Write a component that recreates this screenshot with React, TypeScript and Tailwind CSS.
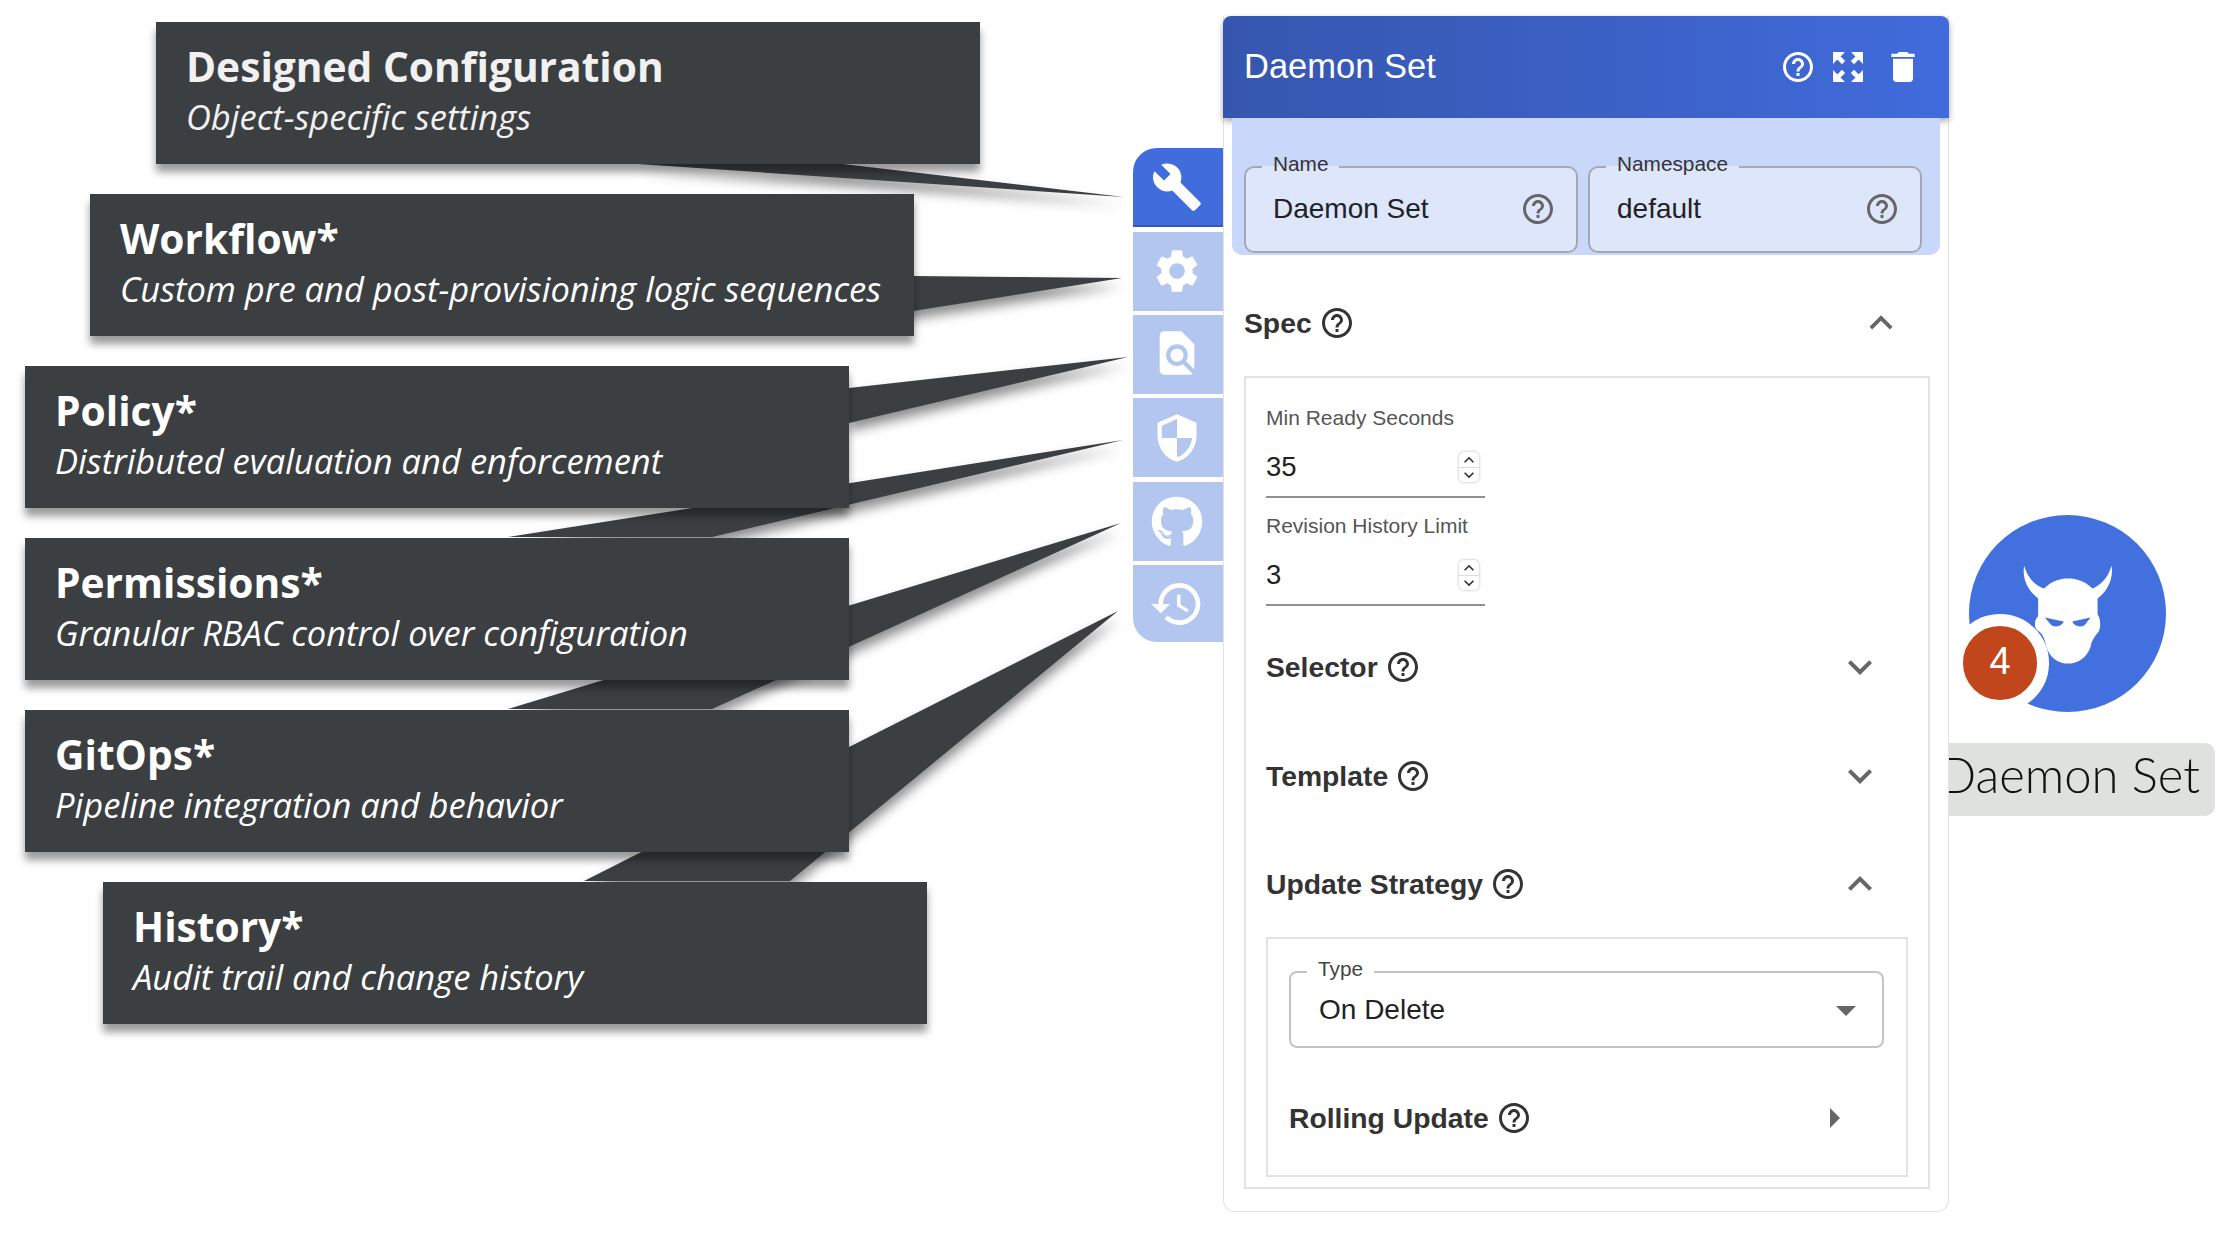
import { FaGithub } from "react-icons/fa";
import {
  MdArrowDropDown,
  MdArrowRight,
  MdBuild,
  MdDelete,
  MdExpandLess,
  MdExpandMore,
  MdFindInPage,
  MdHelpOutline,
  MdKeyboardArrowDown,
  MdKeyboardArrowUp,
  MdRestore,
  MdSecurity,
  MdSettings,
} from "react-icons/md";

const callouts = [
  { title: "Designed Configuration", text: "Object-specific settings", offset: "ml-[156px]", color: "text-[#f1f1f1]" },
  { title: "Workflow*", text: "Custom pre and post-provisioning logic sequences", offset: "ml-[90px]", color: "text-white" },
  { title: "Policy*", text: "Distributed evaluation and enforcement", offset: "ml-[25px]", color: "text-white" },
  { title: "Permissions*", text: "Granular RBAC control over configuration", offset: "ml-[25px]", color: "text-white" },
  { title: "GitOps*", text: "Pipeline integration and behavior", offset: "ml-[25px]", color: "text-white" },
  { title: "History*", text: "Audit trail and change history", offset: "ml-[103px]", color: "text-white" },
];

const tails = [
  "638,164 843,164 1124,197",
  "900,276 913,276 1122,278 913,311 900,311",
  "849,388 1128,357 849,423",
  "508,537 1123,440 712,537",
  "508,709 1121,523 712,709",
  "584,881 1118,611 790,881",
];

const tabs = [
  { icon: <MdBuild size={52} />, box: "h-[79px] bg-[#416cdc] rounded-tl-[24px] border-b-2 border-[#3558b8] mb-[5px]" },
  { icon: <MdSettings size={52} className="-mt-[2px]" />, box: "h-[79px] bg-[#b3c6f0] mb-[4px]" },
  { icon: <MdFindInPage size={52} className="-mt-[3px]" />, box: "h-[79px] bg-[#b3c6f0] mb-[4px]" },
  { icon: <MdSecurity size={52} />, box: "h-[79px] bg-[#b3c6f0] mb-[5px]" },
  { icon: <FaGithub size={52} />, box: "h-[79px] bg-[#b3c6f0] mb-[4px]" },
  { icon: <MdRestore size={56} />, box: "h-[77px] bg-[#b3c6f0] rounded-bl-[24px]" },
];

const ZoomOutMapIcon = ({ size }: { size: number }) => (
  <svg viewBox="0 0 24 24" width={size} height={size} fill="currentColor" stroke="currentColor" strokeWidth="0.9" className="ml-[13px]">
    <path d="M15 3l2.3 2.3-2.89 2.87 1.42 1.42L18.7 6.7 21 9V3zM3 9l2.3-2.3 2.87 2.89 1.42-1.42L6.7 5.3 9 3H3zm6 12l-2.3-2.3 2.89-2.87-1.42-1.42L5.3 17.3 3 15v6zm12-6l-2.3 2.3-2.87-2.89-1.42 1.42 2.89 2.87L15 21h6z" />
  </svg>
);

const OutlinedField = ({ label, value }: { label: string; value: string }) => (
  <fieldset className="h-[101px] w-full rounded-[10px] border-2 border-[#a3a8b4] bg-[#dee6fc]">
    <legend className="ml-[16px] px-[11px] pb-[6px] text-[20.8px] leading-[24px] text-[#333]">{label}</legend>
    <div className="flex h-[54px] items-center justify-between pl-[27px] pr-[20px]">
      <span className="text-[28px] text-[#222]">{value}</span>
      <MdHelpOutline size={36} className="text-[#666]" />
    </div>
  </fieldset>
);

const Spinner = () => (
  <div className="flex h-[30px] w-[20px] flex-col items-center justify-center overflow-hidden rounded-[5px] bg-white text-[#333] shadow-[0_0_3px_rgba(0,0,0,0.3)]">
    <MdKeyboardArrowUp size={20} className="-my-[3px] shrink-0" />
    <div className="h-[1px] w-full shrink-0 bg-[#ddd]" />
    <MdKeyboardArrowDown size={20} className="-my-[3px] shrink-0" />
  </div>
);

const NumberField = ({ label, value }: { label: string; value: string }) => (
  <div className="h-[93px] w-[219px]">
    <div className="text-[21px] leading-[26px] text-[#555]">{label}</div>
    <div className="flex h-[67px] items-center justify-between border-b-2 border-[#909090] pr-[6px] pt-[7px]">
      <span className="text-[27.5px] text-[#222]">{value}</span>
      <Spinner />
    </div>
  </div>
);

const SectionTitle = ({ label }: { label: string }) => (
  <div className="flex items-center gap-[7px]">
    <span className="text-[28.3px] font-bold text-[#333]">{label}</span>
    <MdHelpOutline size={36} className="text-[#333]" />
  </div>
);

const SectionRow = ({ label, open, className }: { label: string; open?: boolean; className: string }) => (
  <div className={className}>
    <SectionTitle label={label} />
    {open ? <MdExpandLess size={48} className="text-[#666]" /> : <MdExpandMore size={48} className="text-[#666]" />}
  </div>
);

const App = () => {
  return (
    <div className="flex h-[1234px] w-[2232px] overflow-hidden bg-white font-['Liberation_Sans',Arial,sans-serif]">
      {/* callouts, their tails run under the boxes */}
      <div className="relative w-[1133px] shrink-0 pt-[22px] font-['Open_Sans',sans-serif]">
        <svg className="absolute left-0 top-0 overflow-visible drop-shadow-[0_8px_6px_rgba(0,0,0,0.45)]" width="1133" height="1234">
          {tails.map((points) => (
            <polygon key={points} points={points} fill="#3c3f42" />
          ))}
        </svg>
        <div className="relative flex flex-col gap-[30px]">
          {callouts.map((c) => (
            <div key={c.title} className={`h-[142px] w-[824px] bg-[#3c3f42] pl-[30px] pt-[19px] shadow-[0_8px_8px_rgba(0,0,0,0.4)] ${c.offset} ${c.color}`}>
              <div className="text-[40.7px] font-bold leading-[50px]">{c.title}</div>
              <div className="mt-[6px] text-[34.5px] italic leading-[40px]">{c.text}</div>
            </div>
          ))}
        </div>
      </div>

      {/* stepper tabs */}
      <div className="w-[90px] shrink-0 pt-[148px]">
        {tabs.map((tab, i) => (
          <div key={i} className={`flex items-center justify-center pr-[2px] text-white ${tab.box}`}>
            {tab.icon}
          </div>
        ))}
      </div>

      {/* form panel */}
      <div className="relative z-10 mt-[16px] h-[1196px] w-[726px] shrink-0 rounded-b-[12px] border-x border-b border-[#e2e2e2] bg-white">
        <div className="-mx-px flex h-[102px] items-center rounded-t-[8px] bg-gradient-to-r from-[#3656ae] to-[#416bdc] pl-[21px] pr-[26px] text-white shadow-[0_3px_6px_rgba(0,0,0,0.35)]">
          <span className="flex-1 text-[34.5px]">Daemon Set</span>
          <MdHelpOutline size={36} />
          <ZoomOutMapIcon size={38} />
          <MdDelete size={40} className="ml-[16px]" />
        </div>

        <div className="mx-[8px] flex h-[137px] gap-[10px] rounded-b-[10px] bg-[#c9d8fa] pl-[12px] pr-[18px] pt-[34px]">
          <OutlinedField label="Name" value="Daemon Set" />
          <OutlinedField label="Namespace" value="default" />
        </div>

        <div className="ml-[20px] mt-[48px] flex h-[40px] w-[686px] items-center justify-between pr-[26px]">
          <SectionTitle label="Spec" />
          <MdExpandLess size={46} className="text-[#666]" />
        </div>

        <div className="ml-[20px] mt-[33px] w-[686px] border-2 border-[#e2e2e2] px-[20px] pb-[10px] pt-[27px]">
          <NumberField label="Min Ready Seconds" value="35" />
          <div className="mt-[15px]">
            <NumberField label="Revision History Limit" value="3" />
          </div>

          <SectionRow label="Selector" className="mt-[41px] flex h-[40px] items-center justify-between pr-[24px]" />
          <SectionRow label="Template" className="mt-[69px] flex h-[40px] items-center justify-between pr-[24px]" />
          <SectionRow label="Update Strategy" open className="mt-[68px] flex h-[40px] items-center justify-between pr-[24px]" />

          <div className="mt-[33px] border-2 border-[#e2e2e2] pb-[37px] pl-[21px] pr-[22px] pt-[18px]">
            <fieldset className="h-[91px] rounded-[8px] border-2 border-[#c4c4c4]">
              <legend className="ml-[16px] px-[11px] pb-[6px] text-[20.8px] leading-[24px] text-[#444]">Type</legend>
              <div className="flex h-[46px] items-center justify-between pl-[28px] pr-[12px]">
                <span className="text-[28px] text-[#222]">On Delete</span>
                <MdArrowDropDown size={48} className="text-[#666]" />
              </div>
            </fieldset>
            <div className="mt-[50px] flex h-[40px] items-center justify-between pr-[26px]">
              <SectionTitle label="Rolling Update" />
              <MdArrowRight size={48} className="text-[#666]" />
            </div>
          </div>
        </div>
      </div>

      {/* graph node */}
      <div className="flex-1 pt-[515px]">
        <div className="relative ml-[20px] h-[197px] w-[197px]">
          <svg viewBox="118 75 590 590" className="h-full w-full">
            <circle cx="413" cy="370" r="295" fill="#4270df" />
            <path
              d="M283 227C276 270 298 305 325 325L325 378C314 388 312 410 322 420C336 428 344 440 350 470C360 505 390 520 415 520C440 520 470 505 482 470C486 450 494 440 506 425C514 410 512 385 503 372L503 325C528 308 552 270 545 227C532 268 510 286 488 295C465 272 440 265 415 265C390 265 365 272 343 295C318 286 296 268 283 227Z"
              fill="#fff"
            />
            <path d="M345 382L402 394C396 408 378 413 365 405ZM482 382L427 394C433 408 451 413 464 405Z" fill="#4270df" />
          </svg>
          <div className="absolute left-[-18px] top-[99px] flex h-[98px] w-[98px] items-center justify-center rounded-full border-[12px] border-white bg-[#c2461c] pb-[3px] text-[38px] text-white">
            4
          </div>
        </div>
        <div className="-ml-[60px] mt-[31px] flex h-[73px] w-[326px] items-center justify-end overflow-hidden rounded-[10px] bg-[#dfe1df] pb-[9px] pr-[15px] font-['Lato',sans-serif] text-[49px] font-light text-[#111]">
          Daemon Set
        </div>
      </div>
    </div>
  );
};

export default App;
